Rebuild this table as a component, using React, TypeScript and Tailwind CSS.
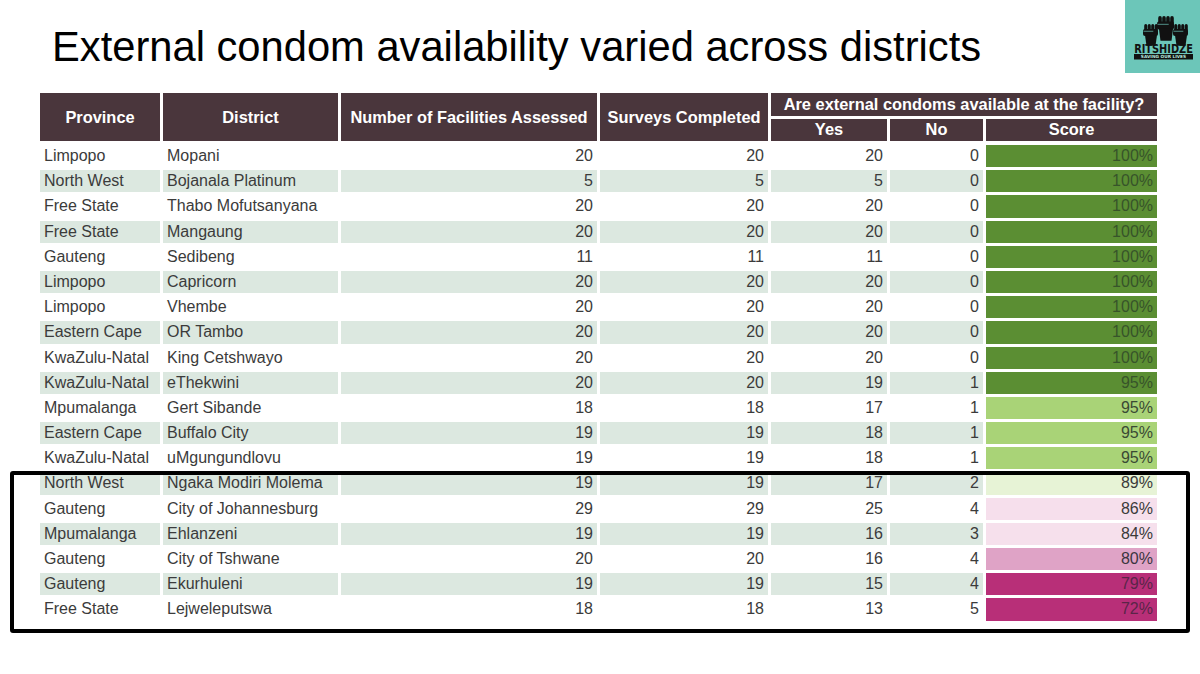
import React from "react";

type Row = {
  province: string;
  district: string;
  facilities: number;
  surveys: number;
  yes: number;
  no: number;
  score: string;
  scoreBg: string;
  scoreText: string;
};

const rows: Row[] = [
  { province: "Limpopo", district: "Mopani", facilities: 20, surveys: 20, yes: 20, no: 0, score: "100%", scoreBg: "bg-[#5b8e33]", scoreText: "text-[#37542a]" },
  { province: "North West", district: "Bojanala Platinum", facilities: 5, surveys: 5, yes: 5, no: 0, score: "100%", scoreBg: "bg-[#5b8e33]", scoreText: "text-[#37542a]" },
  { province: "Free State", district: "Thabo Mofutsanyana", facilities: 20, surveys: 20, yes: 20, no: 0, score: "100%", scoreBg: "bg-[#5b8e33]", scoreText: "text-[#37542a]" },
  { province: "Free State", district: "Mangaung", facilities: 20, surveys: 20, yes: 20, no: 0, score: "100%", scoreBg: "bg-[#5b8e33]", scoreText: "text-[#37542a]" },
  { province: "Gauteng", district: "Sedibeng", facilities: 11, surveys: 11, yes: 11, no: 0, score: "100%", scoreBg: "bg-[#5b8e33]", scoreText: "text-[#37542a]" },
  { province: "Limpopo", district: "Capricorn", facilities: 20, surveys: 20, yes: 20, no: 0, score: "100%", scoreBg: "bg-[#5b8e33]", scoreText: "text-[#37542a]" },
  { province: "Limpopo", district: "Vhembe", facilities: 20, surveys: 20, yes: 20, no: 0, score: "100%", scoreBg: "bg-[#5b8e33]", scoreText: "text-[#37542a]" },
  { province: "Eastern Cape", district: "OR Tambo", facilities: 20, surveys: 20, yes: 20, no: 0, score: "100%", scoreBg: "bg-[#5b8e33]", scoreText: "text-[#37542a]" },
  { province: "KwaZulu-Natal", district: "King Cetshwayo", facilities: 20, surveys: 20, yes: 20, no: 0, score: "100%", scoreBg: "bg-[#5b8e33]", scoreText: "text-[#37542a]" },
  { province: "KwaZulu-Natal", district: "eThekwini", facilities: 20, surveys: 20, yes: 19, no: 1, score: "95%", scoreBg: "bg-[#5b8e33]", scoreText: "text-[#37542a]" },
  { province: "Mpumalanga", district: "Gert Sibande", facilities: 18, surveys: 18, yes: 17, no: 1, score: "95%", scoreBg: "bg-[#a9d377]", scoreText: "text-[#3a4a34]" },
  { province: "Eastern Cape", district: "Buffalo City", facilities: 19, surveys: 19, yes: 18, no: 1, score: "95%", scoreBg: "bg-[#a9d377]", scoreText: "text-[#3a4a34]" },
  { province: "KwaZulu-Natal", district: "uMgungundlovu", facilities: 19, surveys: 19, yes: 18, no: 1, score: "95%", scoreBg: "bg-[#a9d377]", scoreText: "text-[#3a4a34]" },
  { province: "North West", district: "Ngaka Modiri Molema", facilities: 19, surveys: 19, yes: 17, no: 2, score: "89%", scoreBg: "bg-[#e7f3d6]", scoreText: "text-[#3b3b3b]" },
  { province: "Gauteng", district: "City of Johannesburg", facilities: 29, surveys: 29, yes: 25, no: 4, score: "86%", scoreBg: "bg-[#f6dfec]", scoreText: "text-[#3b3b3b]" },
  { province: "Mpumalanga", district: "Ehlanzeni", facilities: 19, surveys: 19, yes: 16, no: 3, score: "84%", scoreBg: "bg-[#f6e0ec]", scoreText: "text-[#3b3b3b]" },
  { province: "Gauteng", district: "City of Tshwane", facilities: 20, surveys: 20, yes: 16, no: 4, score: "80%", scoreBg: "bg-[#dfa3c6]", scoreText: "text-[#3b3540]" },
  { province: "Gauteng", district: "Ekurhuleni", facilities: 19, surveys: 19, yes: 15, no: 4, score: "79%", scoreBg: "bg-[#b82f78]", scoreText: "text-[#5a2548]" },
  { province: "Free State", district: "Lejweleputswa", facilities: 18, surveys: 18, yes: 13, no: 5, score: "72%", scoreBg: "bg-[#b82f78]", scoreText: "text-[#5a2548]" },
];

// one raised fist, drawn around its own centre x
function Fist({ cx, top, w }: { cx: number; top: number; w: number }) {
  const x = cx - w / 2;
  const f = w / 4;
  return (
    <g>
      {/* knuckles */}
      {[0, 1, 2, 3].map((k) => (
        <rect key={k} x={x + k * f + 0.2} y={top} width={f - 0.4} height={w * 0.55} rx={f / 2} fill="#111" />
      ))}
      {/* palm / thumb */}
      <rect x={x - 1} y={top + w * 0.35} width={w + 1} height={w * 0.5} rx={2} fill="#111" />
      <path d={`M${x - 0.5} ${top + w * 0.52} h${w * 0.7}`} stroke="#6cc6b9" strokeWidth="0.7" />
      {/* wrist */}
      <path
        d={`M${x + 1} ${top + w * 0.8} L${x + w - 1} ${top + w * 0.8} L${x + w - 2.5} ${top + w * 1.55} L${x + 2.5} ${top + w * 1.55} Z`}
        fill="#111"
      />
    </g>
  );
}

function Logo() {
  return (
    <svg width="75" height="73" viewBox="0 0 75 73" className="block">
      <rect width="75" height="73" fill="#6cc6b9" />
      <Fist cx={26} top={24} w={14} />
      <Fist cx={56} top={24} w={14} />
      <Fist cx={41} top={16} w={16} />
      <g transform="translate(38.5 52.5) scale(1 1.3)">
        <text
          x="0"
          y="0"
          textAnchor="middle"
          fontFamily="'DejaVu Sans', sans-serif"
          fontWeight="900"
          fontSize="9.8"
          fill="#111"
        >
          RITSHIDZE
        </text>
      </g>
      <rect x="9" y="54" width="59" height="5.5" fill="#111" />
      <text
        x="38.5"
        y="58.4"
        textAnchor="middle"
        fontFamily="'DejaVu Sans', sans-serif"
        fontWeight="700"
        fontSize="4.3"
        fill="#b8e6df"
      >
        SAVING OUR LIVES
      </text>
    </svg>
  );
}

export default function App() {
  const headCell = "flex items-center justify-center bg-[#4a363c] text-[16.4px] font-bold text-white";
  const cols = "grid-cols-[120px_175px_256px_168px_116px_93px_171px]";

  return (
    <div className="relative h-[674px] w-[1200px] overflow-hidden bg-white font-['Liberation_Sans',Arial,sans-serif]">
      <div className="flex h-[93px] items-start justify-between pl-[52px]">
        <h1 className="pt-[23px] text-[41.7px] leading-[48px] text-black">
          External condom availability varied across districts
        </h1>
        <Logo />
      </div>

      <div className={`ml-[40px] grid w-[1117px] ${cols} grid-rows-[22.5px_22.5px] gap-x-[3px] gap-y-[3px]`}>
        <div className={`${headCell} row-span-2`}>Province</div>
        <div className={`${headCell} row-span-2`}>District</div>
        <div className={`${headCell} row-span-2`}>Number of Facilities Assessed</div>
        <div className={`${headCell} row-span-2`}>Surveys Completed</div>
        <div className={`${headCell} col-span-3`}>Are external condoms available at the facility?</div>
        <div className={headCell}>Yes</div>
        <div className={headCell}>No</div>
        <div className={headCell}>Score</div>
      </div>

      <div className={`ml-[40px] mt-[4px] grid w-[1117px] ${cols} auto-rows-[22.2px] gap-x-[3px] gap-y-[3px] text-[16px] leading-[22px] text-[#3b3b3b]`}>
        {rows.map((row, i) => {
          const stripe = i % 2 === 1 ? "bg-[#dce8e0]" : "bg-white";
          return (
            <React.Fragment key={row.district}>
              <div className={`${stripe} truncate pl-[4px]`}>{row.province}</div>
              <div className={`${stripe} truncate pl-[4px]`}>{row.district}</div>
              <div className={`${stripe} pr-[4px] text-right`}>{row.facilities}</div>
              <div className={`${stripe} pr-[4px] text-right`}>{row.surveys}</div>
              <div className={`${stripe} pr-[4px] text-right`}>{row.yes}</div>
              <div className={`${stripe} pr-[4px] text-right`}>{row.no}</div>
              <div className={`${row.scoreBg} ${row.scoreText} pr-[4px] text-right`}>{row.score}</div>
            </React.Fragment>
          );
        })}
      </div>

      {/* highlight box around the lower-scoring districts */}
      <div className="pointer-events-none absolute left-[10px] top-[471px] h-[162px] w-[1180px] rounded-[3px] border-[4px] border-black" />
    </div>
  );
}
